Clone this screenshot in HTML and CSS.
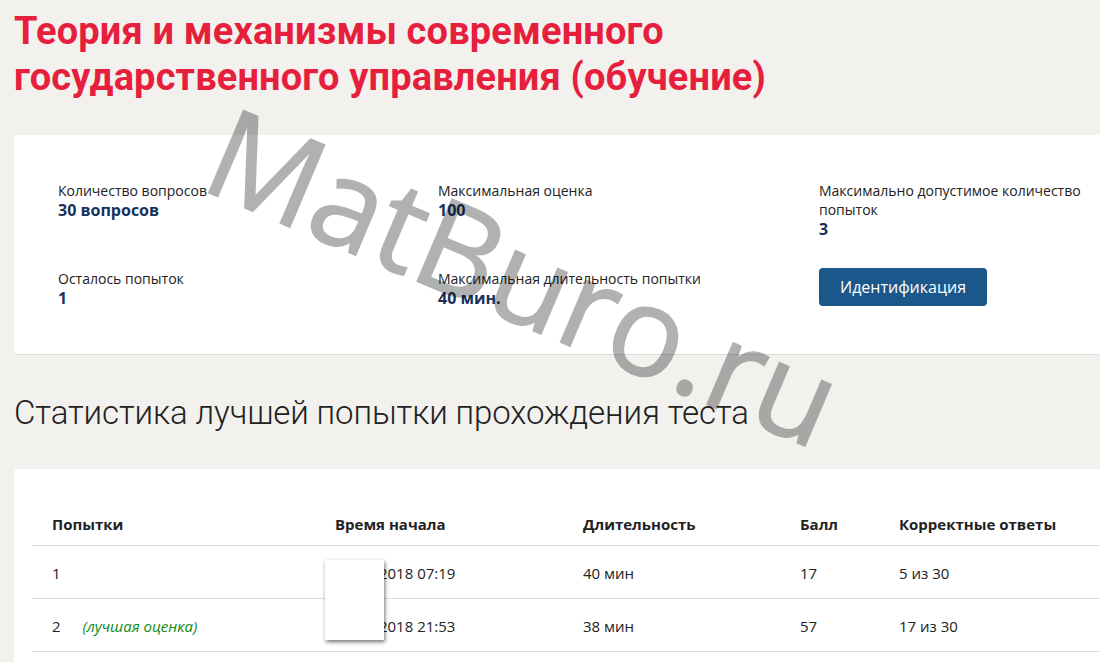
FILE: index.html
```html
<!DOCTYPE html>
<html lang="ru">
<head>
<meta charset="utf-8">
<title>Тест</title>
<link rel="stylesheet" href="styles.css">
</head>
<body>
<div class="page">
  <h1 class="title">Теория и механизмы современного<br>государственного управления (обучение)</h1>

  <section class="card info">
    <div class="item">
      <div class="label">Количество вопросов</div>
      <div class="value">30 вопросов</div>
    </div>
    <div class="item">
      <div class="label">Максимальная оценка</div>
      <div class="value">100</div>
    </div>
    <div class="item">
      <div class="label">Максимально допустимое количество<br>попыток</div>
      <div class="value">3</div>
    </div>
    <div class="item">
      <div class="label">Осталось попыток</div>
      <div class="value">1</div>
    </div>
    <div class="item">
      <div class="label">Максимальная длительность попытки</div>
      <div class="value">40 мин.</div>
    </div>
    <div class="item">
      <button class="btn">Идентификация</button>
    </div>
  </section>

  <h2 class="subtitle">Статистика лучшей попытки прохождения теста</h2>

  <section class="card stats">
    <table class="table">
      <thead>
        <tr>
          <th class="c1">Попытки</th>
          <th class="c2">Время начала</th>
          <th class="c3">Длительность</th>
          <th class="c4">Балл</th>
          <th class="c5">Корректные ответы</th>
        </tr>
      </thead>
      <tbody>
        <tr>
          <td>1</td>
          <td>14-02-2018 07:19</td>
          <td>40 мин</td>
          <td>17</td>
          <td>5 из 30</td>
        </tr>
        <tr>
          <td>2 <span class="best">(лучшая оценка)</span></td>
          <td>18-02-2018 21:53</td>
          <td>38 мин</td>
          <td>57</td>
          <td>17 из 30</td>
        </tr>
      </tbody>
    </table>
    <div class="mask"></div>
  </section>
</div>
<div class="watermark">MatBuro.ru</div>
</body>
</html>
```
FILE: styles.css
```css
html, body {
  margin: 0;
  padding: 0;
}
body {
  background: #f2f1ee;
  font-family: "Open Sans", "Noto Sans", sans-serif;
  color: #222;
  overflow: hidden;
  width: 1100px;
  height: 662px;
  position: relative;
}
.page {
  padding: 8px 0 0 14px;
  width: 1130px;
}
.title {
  margin: 0;
  font-family: "Roboto", sans-serif;
  font-weight: 700;
  font-size: 38px;
  line-height: 46px;
  color: #e61f3d;
  letter-spacing: 0.15px;
}
.card {
  background: #fff;
  border-radius: 4px;
  box-shadow: 0 1px 0 #dcdcda;
}
.info {
  margin-top: 35px;
  padding: 46px 0 46px 44px;
  display: grid;
  grid-template-columns: 380px 381px 300px;
  row-gap: 30px;
}
.label {
  font-size: 14px;
  line-height: 19px;
  color: #222;
}
.value {
  font-size: 16px;
  line-height: 20px;
  font-weight: 700;
  color: #16325c;
}
.btn {
  margin-top: -1px;
  background: #1c578b;
  color: #fff;
  border: 0;
  border-radius: 4px;
  font-family: "Open Sans", "Noto Sans", sans-serif;
  font-size: 16px;
  height: 38px;
  width: 168px;
  padding: 0;
}
.subtitle {
  margin: 39px 0 0 0;
  font-family: "Roboto", sans-serif;
  font-weight: 300;
  font-size: 33px;
  line-height: 40px;
  letter-spacing: -0.1px;
  color: #222;
}
.stats {
  margin-top: 36px;
  padding: 31px 0 0 18px;
  height: 300px;
  position: relative;
}
.table {
  border-collapse: collapse;
  width: 1100px;
  font-size: 15px;
  color: #222;
}
.table th {
  text-align: left;
  font-weight: 700;
  padding: 13px 20px 10px;
  line-height: 22px;
  border-bottom: 1px solid #ddd;
}
.table td {
  padding: 16px 20px 14px;
  line-height: 22px;
  border-bottom: 1px solid #ddd;
}
.c1 { width: 243px; }
.c2 { width: 208px; }
.c3 { width: 177px; }
.c4 { width: 59px; }
.best {
  margin-left: 18px;
  color: #0f8a18;
  font-style: italic;
}
.mask {
  position: absolute;
  left: 311px;
  top: 91px;
  width: 59px;
  height: 80px;
  background: #fff;
  box-shadow: 1px 2px 4px rgba(0, 0, 0, 0.55);
}
.watermark {
  position: absolute;
  left: 192px;
  top: 76px;
  font-family: "Open Sans", sans-serif;
  font-weight: 400;
  font-size: 125px;
  line-height: 125px;
  color: #000;
  -webkit-text-stroke: 1.5px #000;
  opacity: 0.3;
  transform: rotate(23deg);
  transform-origin: 0 100%;
  white-space: nowrap;
  pointer-events: none;
}
```
